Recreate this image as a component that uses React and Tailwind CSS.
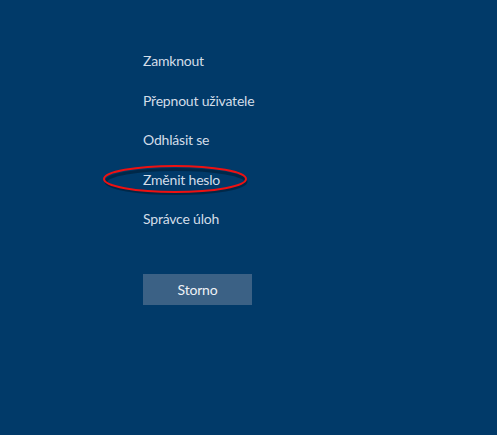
export default function App() {
  const items = ["Zamknout", "Přepnout uživatele", "Odhlásit se", "Změnit heslo", "Správce úloh"];

  return (
    <div
      className="w-[497px] h-[435px] bg-[#013a69] text-[#d3dde8] text-[14px] leading-[20px] tracking-[-0.2px]"
      style={{ fontFamily: 'Lato, "Open Sans", sans-serif' }}
    >
      <div className="pl-[143px] pt-[51px] flex flex-col gap-[19.5px]">
        {items.map((item) => (
          <div key={item} className="relative h-[20px]">
            {item === "Změnit heslo" && (
              <svg
                className="absolute left-[-40px] top-[-6px]"
                width="150"
                height="36"
                viewBox="0 0 150 36"
              >
                <ellipse cx="73" cy="17.5" rx="70" ry="12" fill="none" stroke="rgba(0,0,0,0.3)" strokeWidth="3" />
                <ellipse cx="72" cy="15" rx="71" ry="13" fill="none" stroke="#ee1111" strokeWidth="2" />
              </svg>
            )}
            <span className="relative">{item}</span>
          </div>
        ))}
        <button className="mt-[25.5px] w-[109px] h-[31px] bg-[#3b6185] text-[#eef2f6] text-[14px]">
          Storno
        </button>
      </div>
    </div>
  );
}
